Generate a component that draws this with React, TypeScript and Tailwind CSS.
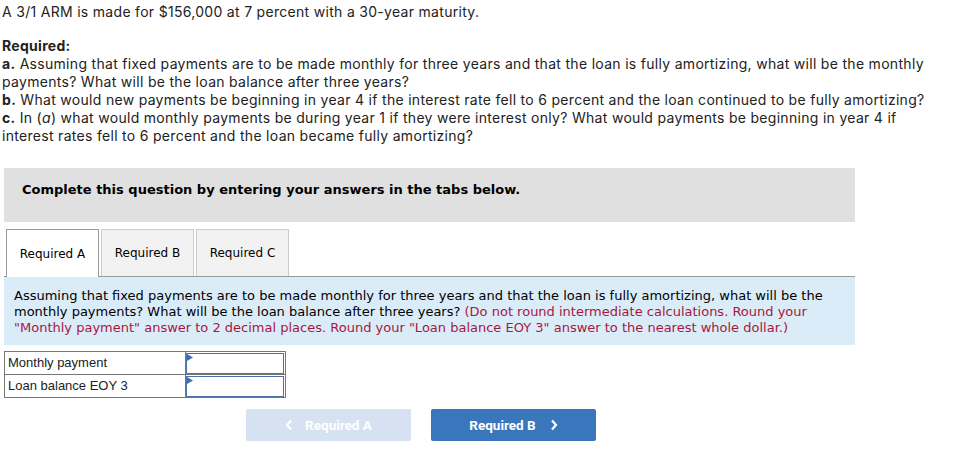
export default function App() {
  return (
    <div className="min-h-[466px] w-[954px] bg-white text-[#222]">
      <div className="px-[2px] pt-[3px] font-['Inter',sans-serif] text-[14px] leading-[18px] tracking-[0.3px]">
        <p>A 3/1 ARM is made for $156,000 at 7 percent with a 30-year maturity.</p>
        <p className="mt-[16px] font-bold">Required:</p>
        <p>
          <b>a.</b> Assuming that fixed payments are to be made monthly for three years and that the loan is fully amortizing, what will be the monthly
          payments? What will be the loan balance after three years?
        </p>
        <p>
          <b>b.</b> What would new payments be beginning in year 4 if the interest rate fell to 6 percent and the loan continued to be fully amortizing?
        </p>
        <p>
          <b>c.</b> In (<i>a</i>) what would monthly payments be during year 1 if they were interest only? What would payments be beginning in year 4 if
          interest rates fell to 6 percent and the loan became fully amortizing?
        </p>
      </div>

      <div className="ml-[4px] mt-[23px] h-[54px] w-[851px] bg-[#e0e0e0] pl-[18px] pt-[14px] font-['DejaVu_Sans',Verdana,sans-serif] text-[13px] font-bold leading-[16px] text-black">
        Complete this question by entering your answers in the tabs below.
      </div>

      <div className="ml-[4px] mt-[7px] w-[851px] font-['DejaVu_Sans',Verdana,sans-serif]">
        <div className="flex items-end gap-[2px] border-b border-[#999] pl-[2px]">
          <div className="-mb-px flex h-[48px] w-[93px] items-center justify-center border border-b-0 border-[#999] bg-white text-[12px] text-black">
            Required A
          </div>
          <div className="flex h-[47px] w-[93px] items-center justify-center border border-b-0 border-[#ccc] bg-[#f2f2f2] text-[12px] text-black">
            Required B
          </div>
          <div className="flex h-[47px] w-[93px] items-center justify-center border border-b-0 border-[#ccc] bg-[#f2f2f2] text-[12px] text-black">
            Required C
          </div>
        </div>
        <div className="h-[68px] bg-[#dbecf9] px-[10px] pt-[11px] text-[13px] leading-[16px] text-black">
          Assuming that fixed payments are to be made monthly for three years and that the loan is fully amortizing, what will be the monthly payments? What will be the loan balance after three years?{' '}
          <span className="text-[#a8173c]">
            (Do not round intermediate calculations. Round your &quot;Monthly payment&quot; answer to 2 decimal places. Round your &quot;Loan balance EOY 3&quot; answer to the nearest whole dollar.)
          </span>
        </div>
      </div>

      <table className="ml-[4px] mt-[6px] border-collapse font-['Liberation_Sans',Arial,sans-serif] text-[13px] text-[#222]">
        <tbody>
          {['Monthly payment', 'Loan balance EOY 3'].map((label) => (
            <tr key={label}>
              <td className="h-[23px] w-[181px] border border-[#777] px-[3px] leading-[16px]">{label}</td>
              <td className="h-[23px] w-[100px] border border-[#777] p-0">
                <div className="relative h-[21px] w-[98px] border border-[#4a72aa]">
                  <svg className="absolute left-0 top-0" width="6" height="7" viewBox="0 0 6 7">
                    <path d="M0 0 L6 3.5 L0 7 Z" fill="#3d6fb5" />
                  </svg>
                </div>
              </td>
            </tr>
          ))}
        </tbody>
      </table>

      <div className="mt-[11px] flex gap-[20px] pl-[246px] font-['Roboto',sans-serif] text-[13.5px] font-bold text-white">
        <button className="flex h-[32px] w-[165px] items-center justify-center gap-[12px] rounded-[2px] bg-[#d6e2f1]">
          <svg width="8" height="12" viewBox="0 0 8 12">
            <path d="M6 1.5 L2 6 L6 10.5" stroke="white" strokeWidth="2.2" fill="none" />
          </svg>
          Required A
        </button>
        <button className="flex h-[32px] w-[165px] items-center justify-center gap-[14px] rounded-[2px] bg-[#3a76bb]">
          Required B
          <svg width="8" height="12" viewBox="0 0 8 12">
            <path d="M2 1.5 L6 6 L2 10.5" stroke="white" strokeWidth="2.2" fill="none" />
          </svg>
        </button>
      </div>
    </div>
  );
}
